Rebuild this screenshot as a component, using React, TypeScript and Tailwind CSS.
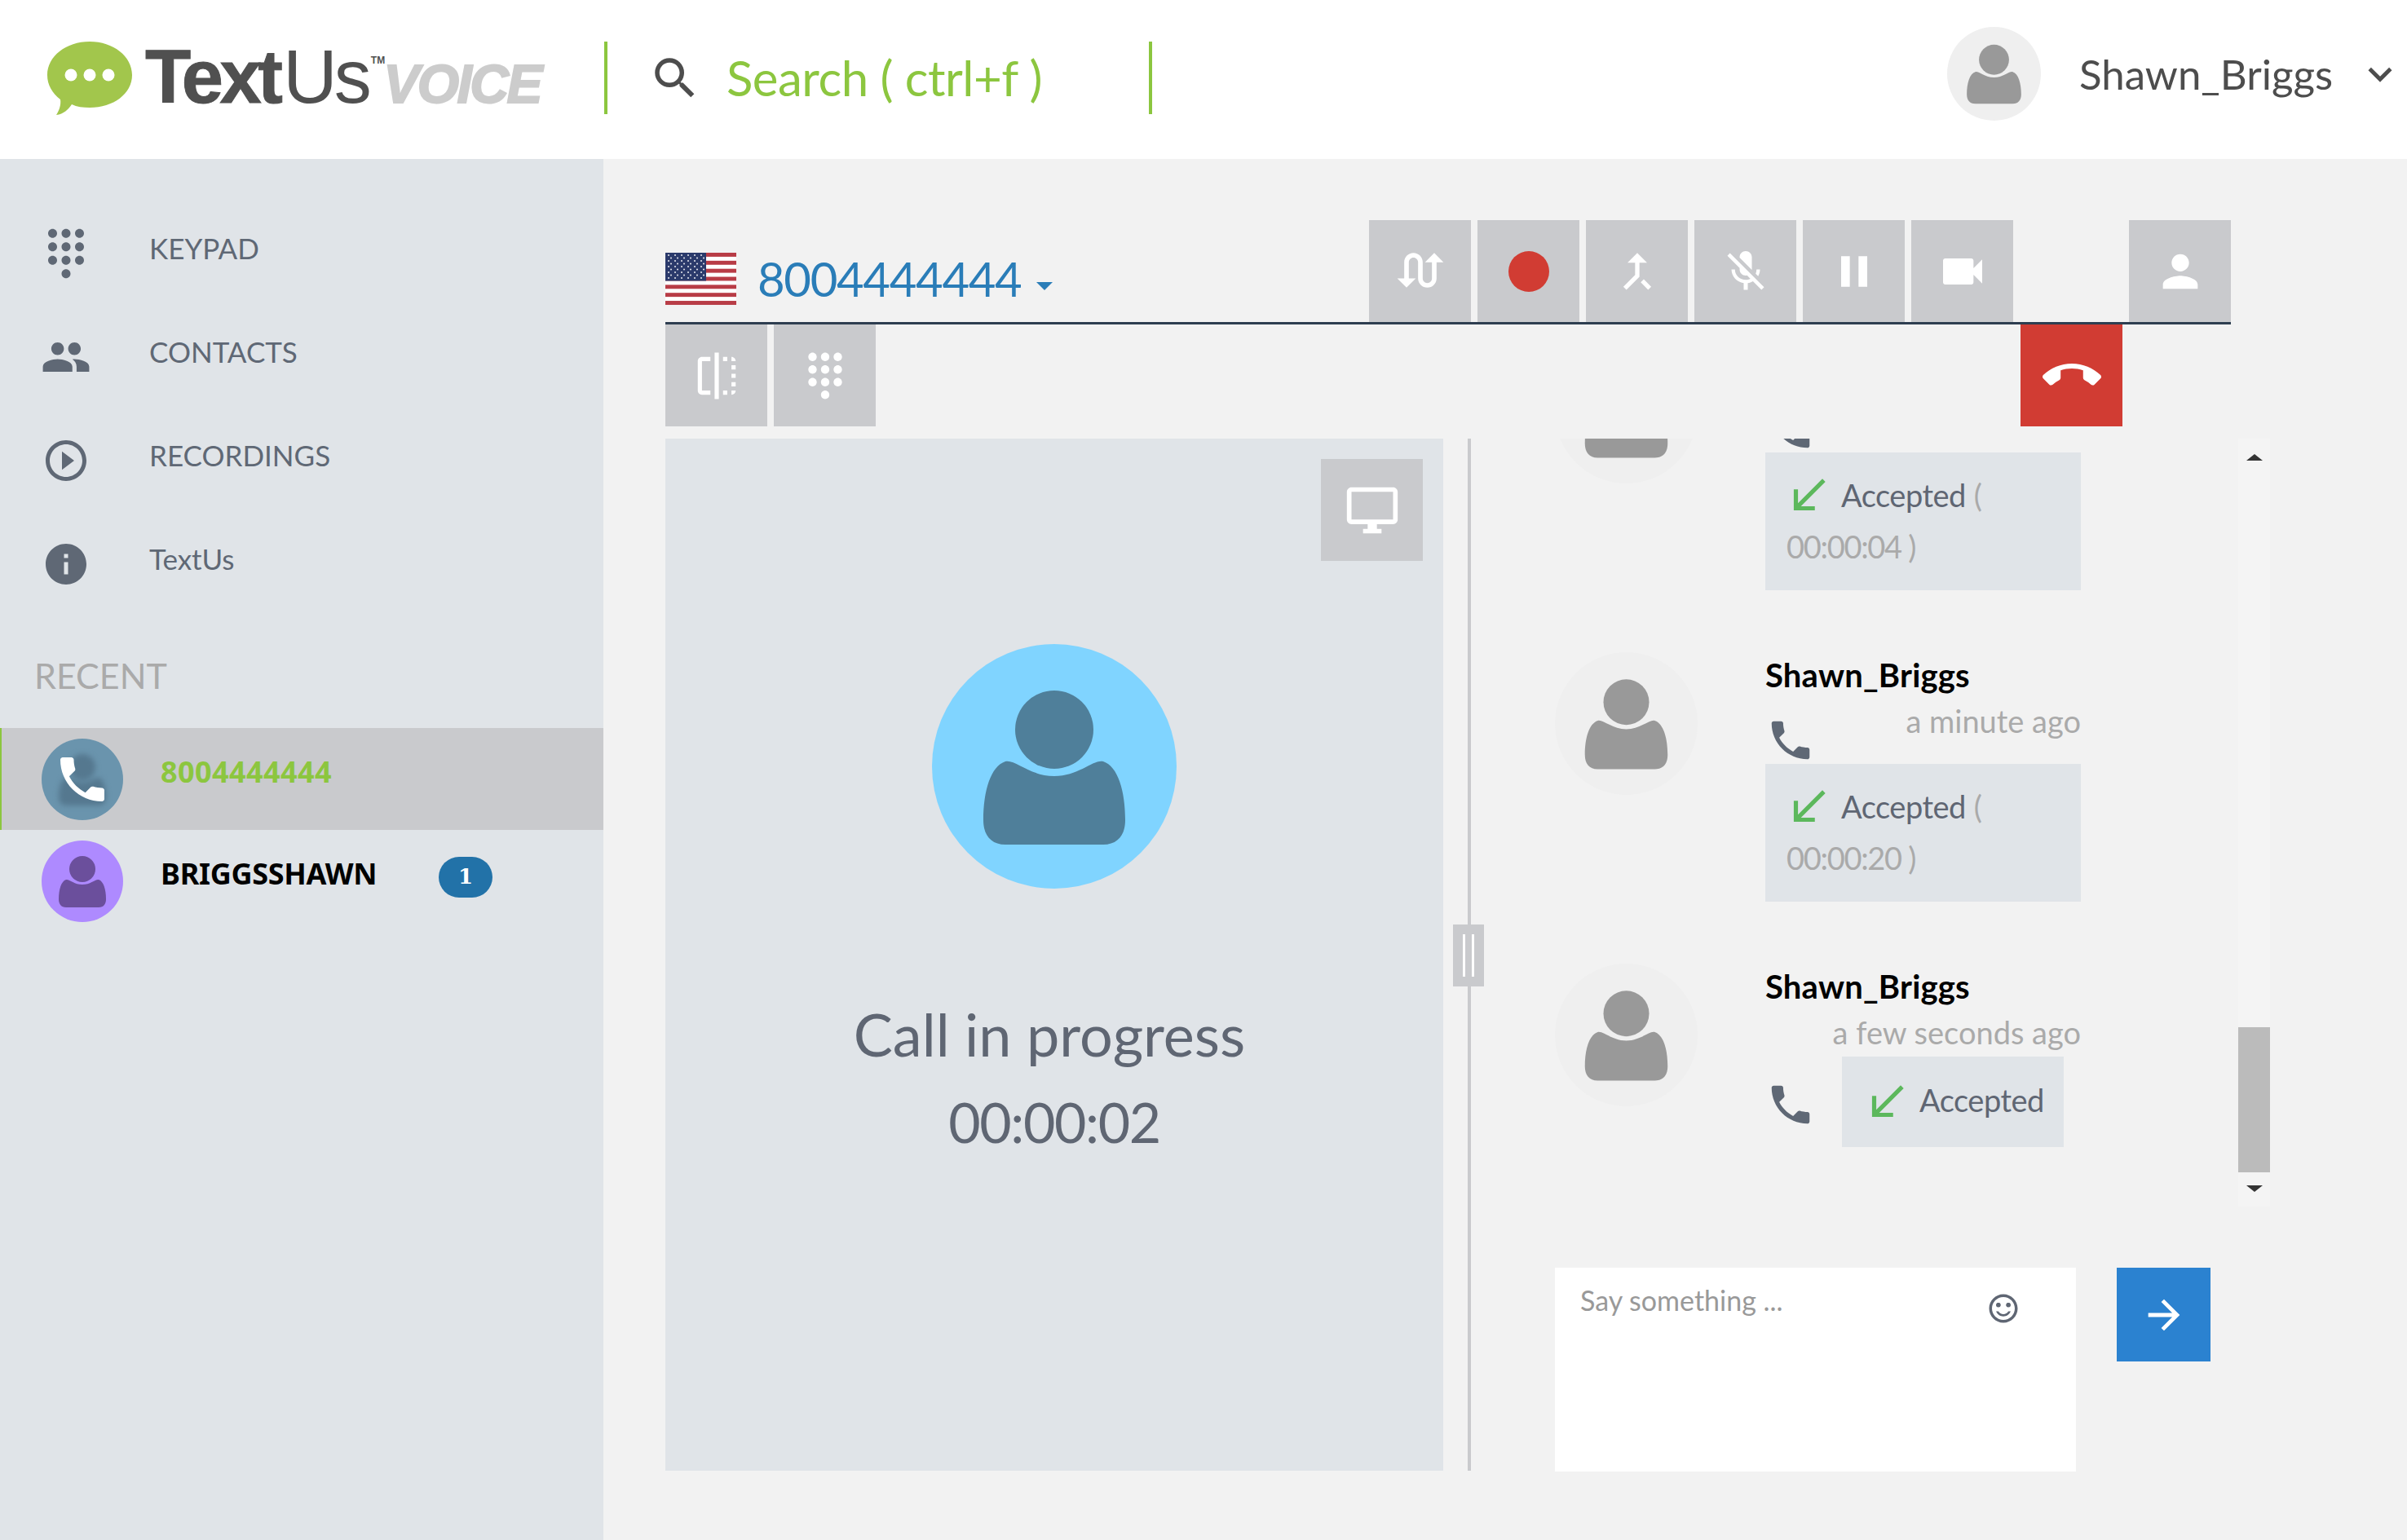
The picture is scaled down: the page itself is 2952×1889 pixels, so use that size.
import type { ReactNode } from 'react';
import {
  MdArrowForward,
  MdCallEnd,
  MdCallMerge,
  MdCallReceived,
  MdDialpad,
  MdFlip,
  MdInfo,
  MdKeyboardArrowDown,
  MdMicOff,
  MdOutlineDesktopWindows,
  MdPause,
  MdPeople,
  MdPerson,
  MdPhone,
  MdPlayCircleOutline,
  MdSearch,
  MdSentimentSatisfiedAlt,
  MdSwapCalls,
  MdVideocam,
} from 'react-icons/md';

const nav = [
  { label: 'KEYPAD', icon: <MdDialpad size={66} /> },
  { label: 'CONTACTS', icon: <MdPeople size={62} /> },
  { label: 'RECORDINGS', icon: <MdPlayCircleOutline size={60} /> },
  { label: 'TextUs', icon: <MdInfo size={60} /> },
];

function PersonShape({ head, body, className }: { head: string; body: string; className?: string }) {
  return (
    <svg viewBox="0 0 100 100" className={className ?? 'h-full w-full'}>
      <circle cx="50" cy="35" r="16" className={head} />
      <path
        d="M21 72C21 60 24 50 30 48C34 47 40 54 50 54C60 54 66 47 70 48C76 50 79 60 79 72C79 78 76 82 70 82H30C24 82 21 78 21 72Z"
        className={body}
      />
    </svg>
  );
}

function GreyAvatar({ size }: { size: string }) {
  return (
    <div className={`${size} shrink-0 rounded-full bg-[#efefef]`}>
      <PersonShape head="fill-[#999999]" body="fill-[#999999]" />
    </div>
  );
}

function ToolButton({ children, red }: { children: ReactNode; red?: boolean }) {
  return (
    <div className={`flex h-[125px] w-[125px] shrink-0 items-center justify-center text-white ${red ? 'bg-[#d13c33]' : 'bg-[#c9cacd]'}`}>
      {children}
    </div>
  );
}

function UsFlag() {
  const stripes = [0, 2, 4, 6, 8, 10, 12];
  const stars = [0, 1, 2, 3, 4, 5, 6, 7, 8];
  return (
    <svg viewBox="0 0 87 64" className="h-[64px] w-[87px] shrink-0">
      <rect width="87" height="64" fill="#ffffff" />
      {stripes.map(s => (
        <rect key={s} y={s * 4.92} width="87" height="4.92" fill="#b83c46" />
      ))}
      <rect width="50" height="34.5" fill="#2b3a6b" />
      {stars.map(r =>
        [0, 1, 2, 3, 4, 5].map(c => (
          <circle key={`${r}-${c}`} cx={4 + c * 8 + (r % 2) * 3} cy={3 + r * 3.5} r="0.9" fill="#ffffff" />
        )),
      )}
    </svg>
  );
}

function Logo() {
  return (
    <div className="flex items-center pl-[58px] font-['Liberation_Sans',sans-serif]">
      <svg viewBox="0 0 104 92" className="h-[92px] w-[104px] shrink-0">
        <path d="M52 1C81 1 104 19 104 42C104 65 81 82 52 82C44 82 36 81 30 78C26 84 20 90 11 91C15 85 17 78 16 72C6 64 0 54 0 42C0 19 23 1 52 1Z" fill="#a2c64c" />
        <circle cx="29" cy="42" r="7.5" fill="#ffffff" />
        <circle cx="52" cy="42" r="7.5" fill="#ffffff" />
        <circle cx="75" cy="42" r="7.5" fill="#ffffff" />
      </svg>
      <div className="mb-[3px] ml-[16px] flex w-[500px] items-baseline text-[#505050]">
        <span className="text-[92px] leading-none font-bold tracking-[-4.5px] [-webkit-text-stroke:1px_#505050]">Text</span>
        <span className="ml-[5px] text-[92px] leading-none tracking-[-4px]">Us</span>
        <span className="ml-[3px] self-start pt-[20px] text-[12px] leading-none font-bold">TM</span>
        <span className="-ml-[2px] text-[66px] leading-none font-bold tracking-[-2.5px] text-[#cccccc] italic [-webkit-text-stroke:2px_#cccccc]">VOICE</span>
      </div>
    </div>
  );
}

function Header() {
  return (
    <header className="flex h-[195px] items-center bg-white pb-[4px]">
      <div className="w-[741px] shrink-0">
        <Logo />
      </div>
      <div className="h-[89px] w-[4px] shrink-0 bg-[#8cc63f]" />
      <div className="flex w-[664px] shrink-0 items-center">
        <div className="ml-[50px] text-[#4d4d4d]">
          <MdSearch size={66} />
        </div>
        <span className="ml-[30px] pb-[2px] text-[60px] leading-none tracking-[-0.5px] text-[#8cc63f]">Search ( ctrl+f )</span>
      </div>
      <div className="h-[89px] w-[4px] shrink-0 bg-[#8cc63f]" />
      <div className="ml-auto flex items-center pb-[10px]">
        <GreyAvatar size="h-[115px] w-[115px]" />
        <span className="ml-[47px] text-[51px] leading-none text-[#4d4d4d]">Shawn_Briggs</span>
        <div className="mr-[4px] ml-[29px] text-[#4d4d4d]">
          <MdKeyboardArrowDown size={58} />
        </div>
      </div>
    </header>
  );
}

function Sidebar() {
  return (
    <aside className="w-[740px] shrink-0 bg-[#e0e4e8] pt-[48px]">
      {nav.map(item => (
        <div key={item.label} className="flex h-[127px] items-center">
          <div className="flex w-[162px] shrink-0 justify-center pt-[8px] text-[#5f6875]">{item.icon}</div>
          <span className="mb-[4px] ml-[21px] text-[35px] leading-none text-[#5f6875]">{item.label}</span>
        </div>
      ))}
      <div className="pt-[52px] pb-[38px] pl-[42px] text-[43px] leading-[52px] text-[#aaaaaa]">RECENT</div>
      <div className="flex h-[125px] items-center border-l-2 border-[#8cc63f] bg-[#c9cacd] pl-[49px]">
        <div className="relative h-[100px] w-[100px] shrink-0 overflow-hidden rounded-full bg-[#6a94ad]">
          <PersonShape head="fill-[#55788f]" body="fill-[#55788f]" className="h-full w-full blur-[3px]" />
          <div className="absolute inset-0 flex items-center justify-center text-white">
            <MdPhone size={72} />
          </div>
        </div>
        <span className="mb-[18px] ml-[46px] font-['Noto_Sans',sans-serif] text-[36px] leading-none font-bold tracking-[0.4px] text-[#8cc63f]">8004444444</span>
      </div>
      <div className="flex h-[125px] items-center pl-[51px]">
        <div className="h-[100px] w-[100px] shrink-0 rounded-full bg-[#ae8aff]">
          <PersonShape head="fill-[#6b4f9c]" body="fill-[#6b4f9c]" />
        </div>
        <span className="mb-[18px] ml-[46px] w-[341px] font-['Noto_Sans',sans-serif] text-[36px] leading-none font-bold tracking-[-0.3px] text-black">BRIGGSSHAWN</span>
        <span className="mb-[10px] flex h-[50px] w-[66px] items-center justify-center rounded-full bg-[#2272a8] font-['DejaVu_Serif',serif] text-[26px] font-bold text-white">1</span>
      </div>
    </aside>
  );
}

function CallPanel() {
  return (
    <section className="flex w-[954px] shrink-0 flex-col items-center bg-[#e0e4e8]">
      <div className="flex w-full justify-end pt-[25px] pr-[25px]">
        <ToolButton>
          <MdOutlineDesktopWindows size={68} />
        </ToolButton>
      </div>
      <div className="mt-[102px] h-[300px] w-[300px] rounded-full bg-[#80d4ff]">
        <PersonShape head="fill-[#4f7f9a]" body="fill-[#4f7f9a]" />
      </div>
      <div className="mt-[125px] mr-[12px] text-[72px] leading-[107px] text-[#5f6673]">Call in progress</div>
      <div className="text-[68px] leading-[107px] tracking-[-1.4px] text-[#5f6673]">00:00:02</div>
    </section>
  );
}

function Arrow() {
  return (
    <div className="shrink-0 text-[#5cb85c]">
      <MdCallReceived size={62} />
    </div>
  );
}

// the first message is scrolled past the top of the pane, so only its bubble shows
function Message({ ago, length }: { ago?: string; length: string }) {
  return (
    <div className="mb-[76px] flex">
      <GreyAvatar size="h-[175px] w-[175px]" />
      <div className="ml-[83px] w-[387px]">
        <div className="mt-[3px] h-[50px] text-[40px] leading-[50px] font-bold tracking-[0.2px] text-black">
          {ago ? 'Shawn_Briggs' : ''}
        </div>
        <div className="mt-[6px] flex h-[78px] items-start justify-between">
          <div className="mt-[18px] text-[#5f6875]">
            <MdPhone size={62} />
          </div>
          <span className="text-[38px] leading-[50px] text-[#aaaaaa]">{ago}</span>
        </div>
        <div className="h-[169px] bg-[#e0e4e8] pt-[21px] text-[38px] leading-[63px]">
          <div className="flex h-[63px] items-center pl-[22px]">
            <Arrow />
            <span className="ml-[9px] tracking-[-0.5px] text-[#5f6673]">Accepted</span>
            <span className="ml-[10px] text-[#aaaaaa]">(</span>
          </div>
          <div className="pl-[26px] tracking-[-1.3px] text-[#aaaaaa]">{length}</div>
        </div>
      </div>
    </div>
  );
}

function Scrollbar() {
  return (
    <div className="flex h-[942px] w-[39px] shrink-0 flex-col items-center bg-[#f4f4f4]">
      <div className="mt-[19px] h-0 w-0 border-x-[10px] border-b-[8px] border-x-transparent border-b-[#333333]" />
      <div className="mt-auto h-[178px] w-full bg-[#bbbbbb]" />
      <div className="mt-[16px] mb-[18px] h-0 w-0 border-x-[10px] border-t-[8px] border-x-transparent border-t-[#333333]" />
    </div>
  );
}

function Chat() {
  return (
    <section className="min-w-0 flex-1">
      <div className="flex pl-[103px]">
        <div className="h-[942px] w-[838px] shrink-0 overflow-hidden">
          <div className="-mt-[120px]">
            <Message length="00:00:04 )" />
            <Message ago="a minute ago" length="00:00:20 )" />
            <div className="flex">
              <GreyAvatar size="h-[175px] w-[175px]" />
              <div className="ml-[83px] w-[387px]">
                <div className="mt-[3px] h-[50px] text-[40px] leading-[50px] font-bold tracking-[0.2px] text-black">Shawn_Briggs</div>
                <div className="mt-[6px] h-[55px] text-right text-[38px] leading-[50px] text-[#aaaaaa]">a few seconds ago</div>
                <div className="flex items-center">
                  <div className="mt-[7px] text-[#5f6875]">
                    <MdPhone size={62} />
                  </div>
                  <div className="ml-[32px] flex h-[111px] w-[272px] items-center bg-[#e0e4e8] pl-[24px] text-[38px] text-[#5f6673]">
                    <Arrow />
                    <span className="mb-[4px] ml-[9px] tracking-[-0.5px]">Accepted</span>
                  </div>
                </div>
              </div>
            </div>
          </div>
        </div>
        <Scrollbar />
      </div>
      <div className="mt-[75px] flex items-start gap-[50px] pl-[103px]">
        <div className="flex h-[250px] w-[639px] shrink-0 items-start justify-between bg-white pt-[17px] pr-[68px] pl-[31px]">
          <span className="text-[34px] leading-[46px] text-[#999999]">Say something ...</span>
          <div className="mt-[12px] text-[#5f6673]">
            <MdSentimentSatisfiedAlt size={42} />
          </div>
        </div>
        <div className="flex h-[115px] w-[115px] shrink-0 items-center justify-center bg-[#2b82d0] text-white">
          <MdArrowForward size={58} />
        </div>
      </div>
    </section>
  );
}

function CallView() {
  return (
    <main className="min-w-0 flex-1 bg-[#f2f2f2] pt-[75px] pl-[76px]">
      <div className="flex h-[128px] w-[1920px] items-start border-b-[3px] border-[#2e3e50]">
        <div className="flex w-[863px] shrink-0 items-start pt-[40px]">
          <UsFlag />
          <span className="ml-[26px] pt-[2px] text-[58px] leading-[60px] tracking-[-1.3px] text-[#2a7db8]">8004444444</span>
          <div className="mt-[36px] ml-[19px] h-0 w-0 border-x-[10px] border-t-[10px] border-x-transparent border-t-[#2a7db8]" />
        </div>
        <div className="flex gap-[8px]">
          <ToolButton>
            <MdSwapCalls size={68} />
          </ToolButton>
          <ToolButton>
            <div className="h-[50px] w-[50px] rounded-full bg-[#d13c33]" />
          </ToolButton>
          <ToolButton>
            <MdCallMerge size={64} />
          </ToolButton>
          <ToolButton>
            <MdMicOff size={60} />
          </ToolButton>
          <ToolButton>
            <MdPause size={64} />
          </ToolButton>
          <ToolButton>
            <MdVideocam size={64} />
          </ToolButton>
        </div>
        <div className="ml-auto">
          <ToolButton>
            <MdPerson size={64} />
          </ToolButton>
        </div>
      </div>
      <div className="flex h-[125px] w-[1920px] gap-[8px]">
        <ToolButton>
          <MdFlip size={62} />
        </ToolButton>
        <ToolButton>
          <MdDialpad size={62} />
        </ToolButton>
        <div className="mr-[133px] ml-auto">
          <ToolButton red>
            <MdCallEnd size={72} />
          </ToolButton>
        </div>
      </div>
      <div className="mt-[15px] flex h-[1266px]">
        <CallPanel />
        <div className="relative ml-[30px] h-full w-[4px] shrink-0 bg-[#c9cacd]">
          <div className="absolute top-[596px] -left-[18px] flex h-[76px] w-[38px] justify-center gap-[8px] bg-[#c9cacd] py-[12px]">
            <div className="w-[3px] bg-white" />
            <div className="w-[3px] bg-white" />
          </div>
        </div>
        <Chat />
      </div>
    </main>
  );
}

export default function App() {
  return (
    <div className="flex h-[1889px] w-[2952px] flex-col overflow-hidden bg-[#f2f2f2] font-['Lato',sans-serif]">
      <Header />
      <div className="flex min-h-0 flex-1">
        <Sidebar />
        <CallView />
      </div>
    </div>
  );
}
